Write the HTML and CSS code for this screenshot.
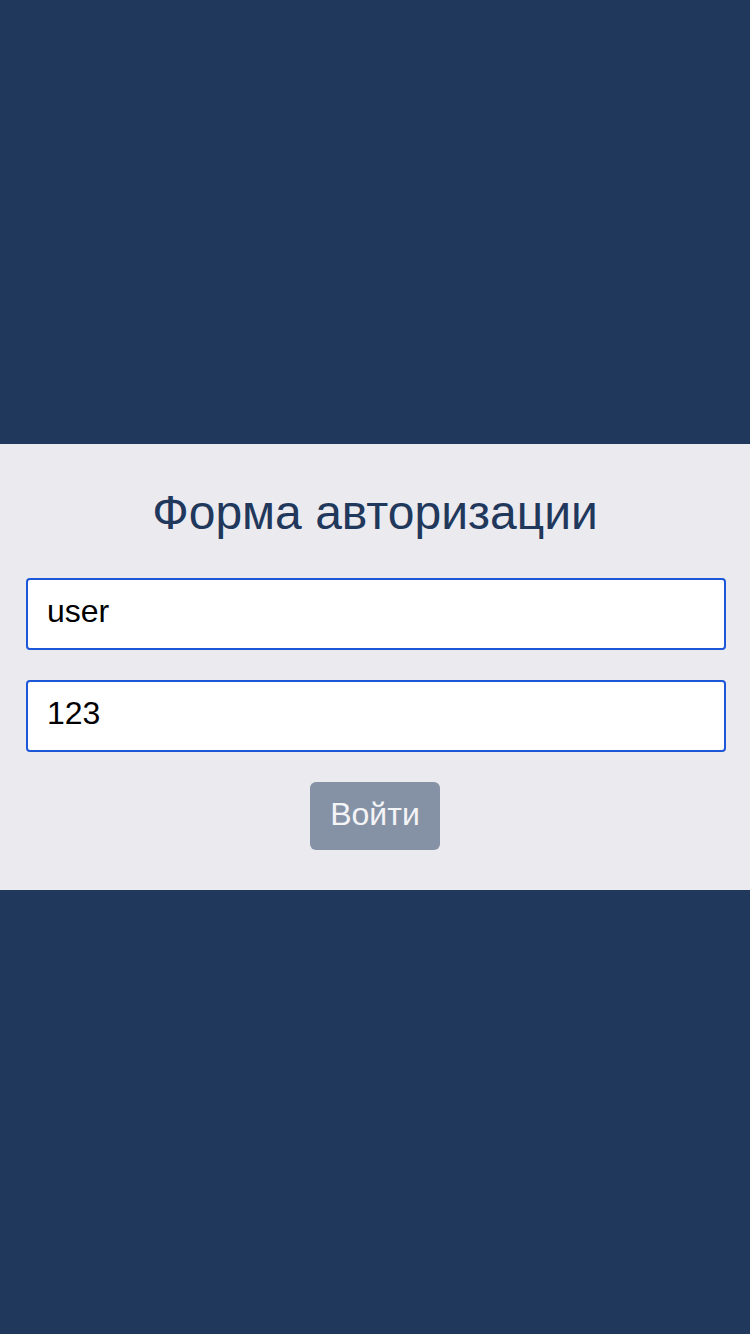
FILE: index.html
```html
<!DOCTYPE html>
<html lang="ru">
<head>
<meta charset="utf-8">
<link rel="stylesheet" href="styles.css">
</head>
<body>
<div class="page">
  <form class="panel">
    <h1 class="title">Форма авторизации</h1>
    <input class="field" type="text" value="user">
    <input class="field" type="text" value="123">
    <button class="btn" type="button">Войти</button>
  </form>
</div>
</body>
</html>
```

FILE: styles.css
```css
html, body {
  margin: 0;
  padding: 0;
  height: 100%;
}
body {
  background: #1f385c;
  font-family: "Liberation Sans", Arial, sans-serif;
}
.page {
  height: 1334px;
  display: flex;
  flex-direction: column;
  justify-content: center;
}
.panel {
  background: #ebeaef;
  height: 446px;
  box-sizing: border-box;
  padding: 38px 0 40px;
  display: flex;
  flex-direction: column;
  align-items: center;
}
.title {
  margin: 0 0 34px;
  font-weight: normal;
  font-size: 48px;
  line-height: 62px;
  color: #1f385c;
}
.field {
  align-self: flex-start;
  width: 700px;
  height: 72px;
  box-sizing: border-box;
  border: 2px solid #1d56d8;
  border-radius: 4px;
  background: #fff;
  padding: 0 19px 5px;
  font-family: "Liberation Sans", Arial, sans-serif;
  font-size: 32px;
  color: #000;
  margin: 0 0 30px 26px;
  outline: none;
}
.btn {
  width: 130px;
  height: 68px;
  border: none;
  border-radius: 6px;
  background: #8592a6;
  color: #f4f4f7;
  font-family: "Liberation Sans", Arial, sans-serif;
  font-size: 32px;
  padding: 0 0 4px;
}
```
